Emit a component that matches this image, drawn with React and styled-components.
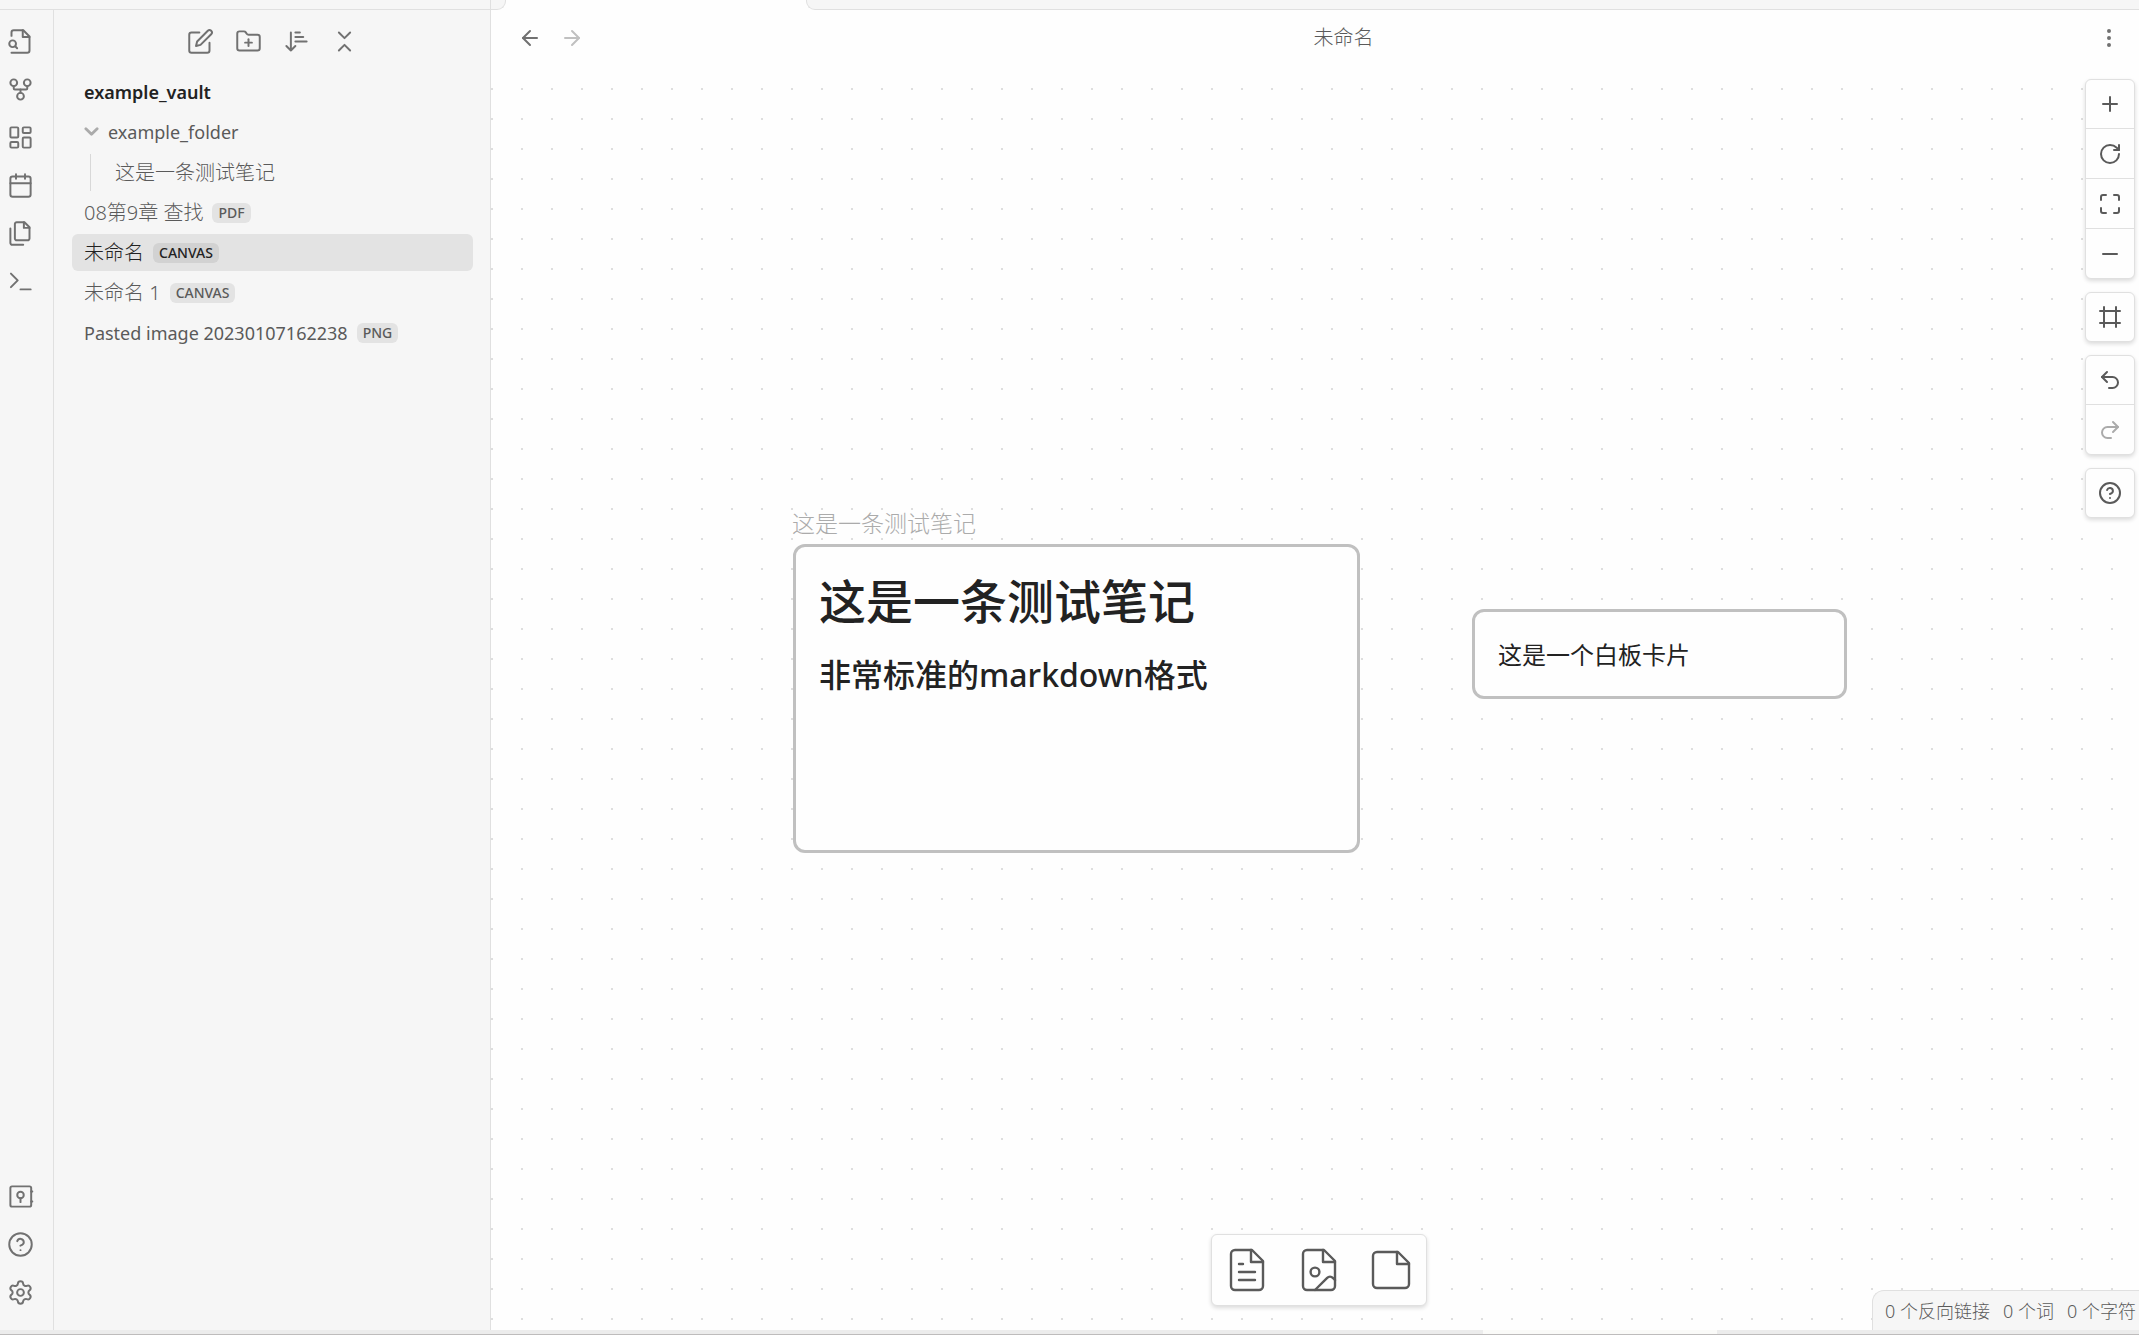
import React from "react";
import styled, { createGlobalStyle } from "styled-components";
import {
  FolderPlus, ArrowLeft, ArrowRight, Plus, RotateCw, Maximize, Minus, Frame,
  Undo2, Redo2, CircleHelp, Settings, GitFork, LayoutDashboard, Calendar,
  EllipsisVertical,
} from "lucide-react";

const Global = createGlobalStyle`
  *, *::before, *::after { box-sizing: border-box; }
  html, body, #root { height: 100%; margin: 0; }
  body {
    font-family: "Noto Sans", "Noto Sans CJK SC", sans-serif;
    color: #5a5a5a;
    background: #f6f6f6;
    overflow: hidden;
  }
  button { font: inherit; }
  h1, h2, p, ul { margin: 0; padding: 0; }
`;

const Window = styled.div`
  display: flex;
  flex-direction: column;
  height: 100vh;
`;
const Body = styled.div`
  display: grid;
  grid-template-columns: 54px 437px minmax(0, 1fr);
  grid-template-rows: 10px minmax(0, 1fr);
  flex: 1;
  min-height: 0;
`;
const TabStrip = styled.div`
  grid-column: 1 / -1;
  display: grid;
  grid-template-columns: 506px 300px minmax(0, 1fr);
  background: linear-gradient(to right, #f6f6f6 490px, #fefefe 490px);
`;
const TabEdge = styled.div`
  background: #f6f6f6;
  border-bottom: 1px solid #e0e0e0;
  border-left: ${(p) => (p.$side === "right" ? "1px solid #e0e0e0" : "0")};
  border-right: ${(p) => (p.$side === "left" ? "1px solid #e0e0e0" : "0")};
  border-radius: ${(p) => (p.$side === "left" ? "0 0 9px 0" : "0 0 0 9px")};
`;
const SidebarEdge = styled.div`
  width: 491px;
  height: 9px;
  border-right: 1px solid #e0e0e0;
`;
const ActiveTab = styled.div`
  background: #fefefe;
`;
const Ribbon = styled.nav`
  display: flex;
  flex-direction: column;
  justify-content: space-between;
  padding: 13px 0 20px 2px;
  border-right: 1px solid #e0e0e0;
`;
const RibbonGroup = styled.div`
  display: flex;
  flex-direction: column;
  gap: 12px;
`;
const IconButton = styled.button`
  display: flex;
  align-items: center;
  justify-content: center;
  width: 36px;
  height: 36px;
  padding: 0;
  border: 0;
  background: transparent;
  color: ${(p) => (p.$faint ? "#c0c0c0" : "#717171")};
`;
const Sidebar = styled.aside`
  border-right: 1px solid #e0e0e0;
`;
const SideTools = styled.div`
  display: flex;
  justify-content: center;
  gap: 12px;
  padding: 13px 0 14px;
`;
const Explorer = styled.div`
  padding: 0 17px 0 18px;
`;
const Vault = styled.h2`
  padding-left: 12px;
  margin-bottom: 2px;
  font-size: 18px;
  line-height: 38px;
  font-weight: 600;
  color: #222;
`;
const Tree = styled.ul`
  list-style: none;
  display: flex;
  flex-direction: column;
  gap: 3px;
`;
const Branch = styled(Tree)`
  margin: 4px 0 0 18px;
  padding-left: 12px;
  border-left: 1px solid #d8d8d8;
`;
const Row = styled.button`
  display: flex;
  align-items: center;
  gap: 9px;
  width: 100%;
  height: 37px;
  padding: 0 12px;
  border: 0;
  border-radius: 6px;
  background: ${(p) => (p.$active ? "#e3e3e3" : "transparent")};
  color: ${(p) => (p.$active ? "#222" : "#5a5a5a")};
  text-align: left;
  white-space: pre;
`;
const Name = styled.span`
  font-size: ${(p) => (p.$latin ? 18 : 20)}px;
  font-weight: ${(p) => (p.$latin ? 400 : 300)};
  line-height: 30px;
`;
const Tag = styled.span`
  padding: 0 6px;
  border-radius: 6px;
  background: ${(p) => (p.$active ? "#d2d2d2" : "#e3e3e3")};
  font-size: 14px;
  line-height: 20px;
  font-weight: 500;
`;
const Main = styled.main`
  position: relative;
  display: flex;
  flex-direction: column;
  background: #fefefe;
  min-width: 0;
`;
const ViewHeader = styled.header`
  display: grid;
  grid-template-columns: auto 1fr auto;
  align-items: center;
  height: 56px;
  padding: 0 12px 0 21px;
`;
const NavButtons = styled.div`
  display: flex;
  gap: 6px;
  padding-right: 6px;
`;
const Title = styled.h1`
  font-size: 20px;
  line-height: 28px;
  font-weight: 300;
  text-align: center;
`;
const Canvas = styled.section`
  position: relative;
  flex: 1;
  background-image: radial-gradient(circle at 1px 1px, #dedede 1px, transparent 1px);
  background-size: 30px 30px;
  background-position: 0 22px;
`;
const Node = styled.article`
  position: absolute;
  left: ${(p) => p.$x}px;
  top: ${(p) => p.$y}px;
  width: ${(p) => p.$w}px;
  height: ${(p) => p.$h}px;
  padding: 0 23px;
  border: 3px solid #c0c0c0;
  border-radius: 12px;
  background: #fefefe;
  color: #222;
  white-space: nowrap;
`;
const NodeLabel = styled.div`
  position: absolute;
  left: ${(p) => p.$x}px;
  top: ${(p) => p.$y}px;
  font-size: 23px;
  line-height: 32px;
  font-weight: 300;
  color: #ababab;
`;
const NoteTitle = styled.h1`
  padding-top: 22px;
  font-size: 47px;
  line-height: 64px;
  font-weight: 500;
`;
const NoteHeading = styled.h2`
  padding-top: 20px;
  font-size: 32px;
  line-height: 44px;
  font-weight: 500;
`;
const CardText = styled.p`
  padding-top: 25px;
  font-size: 24px;
  line-height: 36px;
`;
const Controls = styled.div`
  position: absolute;
  top: 69px;
  right: 4px;
  display: flex;
  flex-direction: column;
  gap: 13px;
`;
const ControlGroup = styled.div`
  border: 1px solid #e0e0e0;
  border-radius: 6px;
  background: #fefefe;
  box-shadow: 0 2px 4px rgba(0, 0, 0, 0.14);
`;
const Control = styled.button`
  display: flex;
  align-items: center;
  justify-content: center;
  width: 48px;
  height: 48px;
  padding: 0;
  border: 0;
  background: transparent;
  color: ${(p) => (p.$faint ? "#ababab" : "#5a5a5a")};
  & + & {
    height: 50px;
    border-top: 1px solid #e0e0e0;
  }
`;
const CardMenu = styled.div`
  position: absolute;
  bottom: 24px;
  left: calc(50% + 4px);
  transform: translateX(-50%);
  display: flex;
  gap: 2px;
  border: 1px solid #e0e0e0;
  border-radius: 6px;
  background: #fefefe;
  box-shadow: 0 2px 4px rgba(0, 0, 0, 0.14);
`;
const CardButton = styled.button`
  display: flex;
  align-items: center;
  justify-content: center;
  width: 70px;
  height: 70px;
  padding: 0;
  border: 0;
  background: transparent;
  color: #5a5a5a;
`;
const Status = styled.footer`
  position: absolute;
  right: 0;
  bottom: 0;
  display: flex;
  gap: 13px;
  height: 40px;
  padding: 0 3px 0 12px;
  border: solid #e0e0e0;
  border-width: 1px 0 0 1px;
  border-radius: 12px 0 0 0;
  background: #f6f6f6;
  font-size: 18px;
  line-height: 40px;
  font-weight: 300;
  white-space: nowrap;
`;
const WindowEdge = styled.div`
  height: 5px;
  background: linear-gradient(to right, #ececec 1483px, #fafaf8 1483px, #fafaf8 1717px, #ececec 1717px);
  border-bottom: 1px solid #bebcbc;
`;

const Svg = ({ size = 27, sw = 1.75, box = "0 0 24 24", children }) => (
  <svg width={size} height={size} viewBox={box} fill="none" stroke="currentColor"
    strokeWidth={sw} strokeLinecap="round" strokeLinejoin="round" aria-hidden="true">
    {children}
  </svg>
);
const FileSearch = () => (
  <Svg>
    <path d="M4 7V4a2 2 0 0 1 2-2h8.500L20 7.500V20a2 2 0 0 1-2 2H4" />
    <path d="M14 2v6h6" />
    <circle cx="5" cy="14" r="3" />
    <path d="m9 18-1.500-1.500" />
  </Svg>
);
const Prompt = () => (
  <Svg>
    <path d="m3.500 17 6-6-6-6" />
    <path d="M12 19h9" />
  </Svg>
);
const Pages = () => (
  <Svg>
    <path d="M15.500 2H8.600c-.4 0-.8.2-1.100.5-.3.300-.5.700-.5 1.100v12.800c0 .4.2.8.5 1.100.3.300.7.500 1.100.5h9.800c.4 0 .8-.2 1.100-.5.3-.3.5-.7.5-1.100V6.500L15.500 2z" />
    <path d="M3 7.600v12.800c0 .4.2.8.5 1.100.3.300.7.500 1.100.5h9.800" />
    <path d="M15 2v5h5" />
  </Svg>
);
const Edit = () => (
  <Svg>
    <path d="M11 4H4a2 2 0 0 0-2 2v14a2 2 0 0 0 2 2h14a2 2 0 0 0 2-2v-7" />
    <path d="M18.500 2.500a2.121 2.121 0 0 1 3 3L12 15l-4 1 1-4z" />
  </Svg>
);
const SortIcon = () => (
  <Svg>
    <path d="m3 16 4 4 4-4M7 20V4M11 4h4M11 8h7M11 12h10" />
  </Svg>
);
const Collapse = () => (
  <Svg>
    <path d="m7 20 5-5 5 5M7 4l5 5 5-5" />
  </Svg>
);
const Chevron = () => (
  <Svg size={15} sw={3} box="4 4 16 16">
    <path d="m6 9 6 6 6-6" stroke="#ababab" />
  </Svg>
);
const VaultIcon = () => (
  <Svg>
    <rect x="3" y="3" width="18.500" height="18" rx="1.500" />
    <circle cx="12" cy="10.700" r="2.900" />
    <path d="M12 13.600V17M21.500 7.500h1M21.500 16.500h1" />
  </Svg>
);
const DocIcon = () => (
  <Svg size={48} sw={1.2}>
    <path d="M14.500 2H6a2 2 0 0 0-2 2v16a2 2 0 0 0 2 2h12a2 2 0 0 0 2-2V7.500z" />
    <path d="M14 2v6h6M8 9h2M8 13h8M8 17h8" />
  </Svg>
);
const MediaIcon = () => (
  <Svg size={48} sw={1.2}>
    <path d="M14.500 2H6a2 2 0 0 0-2 2v16a2 2 0 0 0 2 2h12a2 2 0 0 0 2-2V7.500z" />
    <path d="M14 2v6h6M20 17l-1.090-1.090a2 2 0 0 0-2.820 0L10 22" />
    <circle cx="10" cy="13" r="2.200" />
  </Svg>
);
const NoteIcon = () => (
  <Svg size={48} sw={1.2}>
    <path d="M15.500 3H5a2 2 0 0 0-2 2v14a2 2 0 0 0 2 2h14a2 2 0 0 0 2-2V8.500z" />
    <path d="M15 3v6h6" />
  </Svg>
);

const L = { size: 27, strokeWidth: 1.75 };
const C = { size: 24, strokeWidth: 2 };

const ribbonTop = [
  ["快速切换", <FileSearch />],
  ["关系图谱", <GitFork {...L} />],
  ["白板", <LayoutDashboard {...L} />],
  ["日记", <Calendar {...L} />],
  ["模板", <Pages />],
  ["命令面板", <Prompt />],
];
const ribbonBottom = [
  ["仓库", <VaultIcon />],
  ["帮助", <CircleHelp {...L} />],
  ["设置", <Settings {...L} />],
];
const sideTools = [
  ["新建笔记", <Edit />],
  ["新建文件夹", <FolderPlus {...L} />],
  ["排序", <SortIcon />],
  ["折叠", <Collapse />],
];
const controls = [
  [["放大", <Plus {...C} />], ["重置", <RotateCw {...C} />], ["适应", <Maximize {...C} />], ["缩小", <Minus {...C} />]],
  [["框架", <Frame {...C} />]],
  [["撤销", <Undo2 {...C} />], ["重做", <Redo2 {...C} />, true]],
  [["帮助", <CircleHelp {...C} />]],
];
const files = [
  { name: "08第9章 查找", tag: "PDF" },
  { name: "未命名", tag: "CANVAS", active: true },
  { name: "未命名 1", tag: "CANVAS" },
  { name: "Pasted image 20230107162238", tag: "PNG", latin: true },
];

const Buttons = ({ items }) =>
  items.map(([label, icon]) => (
    <IconButton key={label} aria-label={label}>{icon}</IconButton>
  ));

export default function App() {
  return (
    <Window>
      <Global />
      <Body>
        <TabStrip>
          <TabEdge $side="left"><SidebarEdge /></TabEdge>
          <ActiveTab />
          <TabEdge $side="right" />
        </TabStrip>
        <Ribbon>
          <RibbonGroup><Buttons items={ribbonTop} /></RibbonGroup>
          <RibbonGroup><Buttons items={ribbonBottom} /></RibbonGroup>
        </Ribbon>
        <Sidebar>
          <SideTools><Buttons items={sideTools} /></SideTools>
          <Explorer>
            <Vault>example_vault</Vault>
            <Tree>
              <li>
                <Row><Chevron /><Name $latin>example_folder</Name></Row>
                <Branch>
                  <li><Row><Name>这是一条测试笔记</Name></Row></li>
                </Branch>
              </li>
              {files.map((f) => (
                <li key={f.name}>
                  <Row $active={f.active}>
                    <Name $latin={f.latin}>{f.name}</Name>
                    <Tag $active={f.active}>{f.tag}</Tag>
                  </Row>
                </li>
              ))}
            </Tree>
          </Explorer>
        </Sidebar>
        <Main>
          <ViewHeader>
            <NavButtons>
              <IconButton aria-label="后退"><ArrowLeft {...C} /></IconButton>
              <IconButton aria-label="前进" $faint><ArrowRight {...C} /></IconButton>
            </NavButtons>
            <Title>未命名</Title>
            <IconButton aria-label="更多选项"><EllipsisVertical {...C} /></IconButton>
          </ViewHeader>
          <Canvas>
            <NodeLabel $x={301} $y={441}>这是一条测试笔记</NodeLabel>
            <Node $x={302} $y={478} $w={567} $h={309}>
              <NoteTitle>这是一条测试笔记</NoteTitle>
              <NoteHeading>非常标准的markdown格式</NoteHeading>
            </Node>
            <Node $x={981} $y={543} $w={375} $h={90}>
              <CardText>这是一个白板卡片</CardText>
            </Node>
            <CardMenu>
              <CardButton aria-label="添加卡片"><DocIcon /></CardButton>
              <CardButton aria-label="添加媒体"><MediaIcon /></CardButton>
              <CardButton aria-label="添加笔记"><NoteIcon /></CardButton>
            </CardMenu>
          </Canvas>
          <Controls>
            {controls.map((group, i) => (
              <ControlGroup key={i}>
                {group.map(([label, icon, faint]) => (
                  <Control key={label} aria-label={label} $faint={faint}>{icon}</Control>
                ))}
              </ControlGroup>
            ))}
          </Controls>
          <Status>
            <span>0 个反向链接</span>
            <span>0 个词</span>
            <span>0 个字符</span>
          </Status>
        </Main>
      </Body>
      <WindowEdge />
    </Window>
  );
}
